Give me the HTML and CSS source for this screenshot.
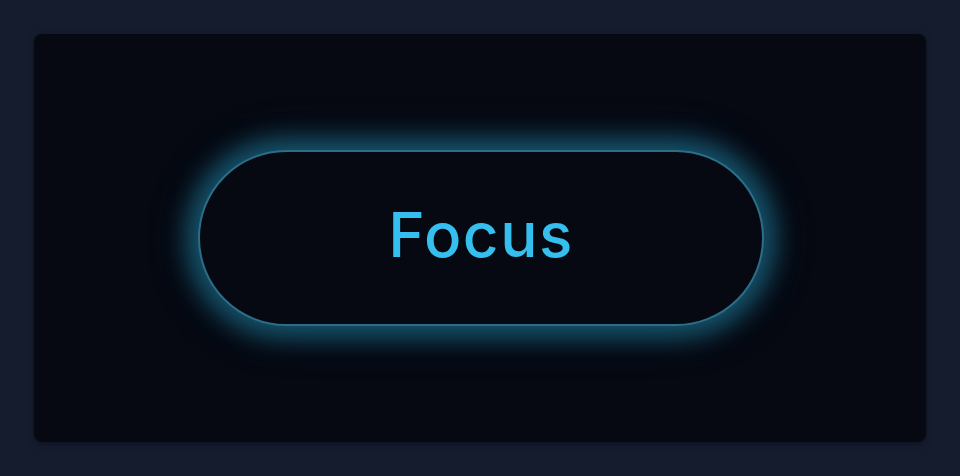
FILE: index.html
```html
<!DOCTYPE html>
<html lang="en">
<head>
  <meta charset="UTF-8">
  <title>Focus</title>
  <link rel="stylesheet" href="styles.css">
</head>
<body>
  <div class="stage">
    <button type="button" class="focus-btn">Focus</button>
  </div>
</body>
</html>
```

FILE: styles.css
```css
* {
  margin: 0;
  padding: 0;
  box-sizing: border-box;
}

body {
  background-color: #141c2e;
  height: 100vh;
  padding: 34px;
  font-family: 'Inter', 'Noto Sans', sans-serif;
}

.stage {
  height: 100%;
  background-color: #060912;
  border-radius: 8px;
  box-shadow: 0 2px 6px rgba(0, 0, 0, 0.35);
  display: flex;
  justify-content: center;
  align-items: center;
}

.focus-btn {
  width: 566px;
  height: 176px;
  margin-left: 2px;
  padding-bottom: 8px;
  background-color: #060912;
  border: 2px solid #2b6e88;
  border-radius: 999px;
  /* soft teal halo around the pill */
  box-shadow: 0 0 22px 12px rgba(28, 118, 148, 0.6),
              0 0 44px 8px rgba(25, 100, 130, 0.25);
  color: #34bfee;
  font-family: inherit;
  font-size: 62px;
  font-weight: 500;
  letter-spacing: 1.5px;
  cursor: pointer;
}
```
